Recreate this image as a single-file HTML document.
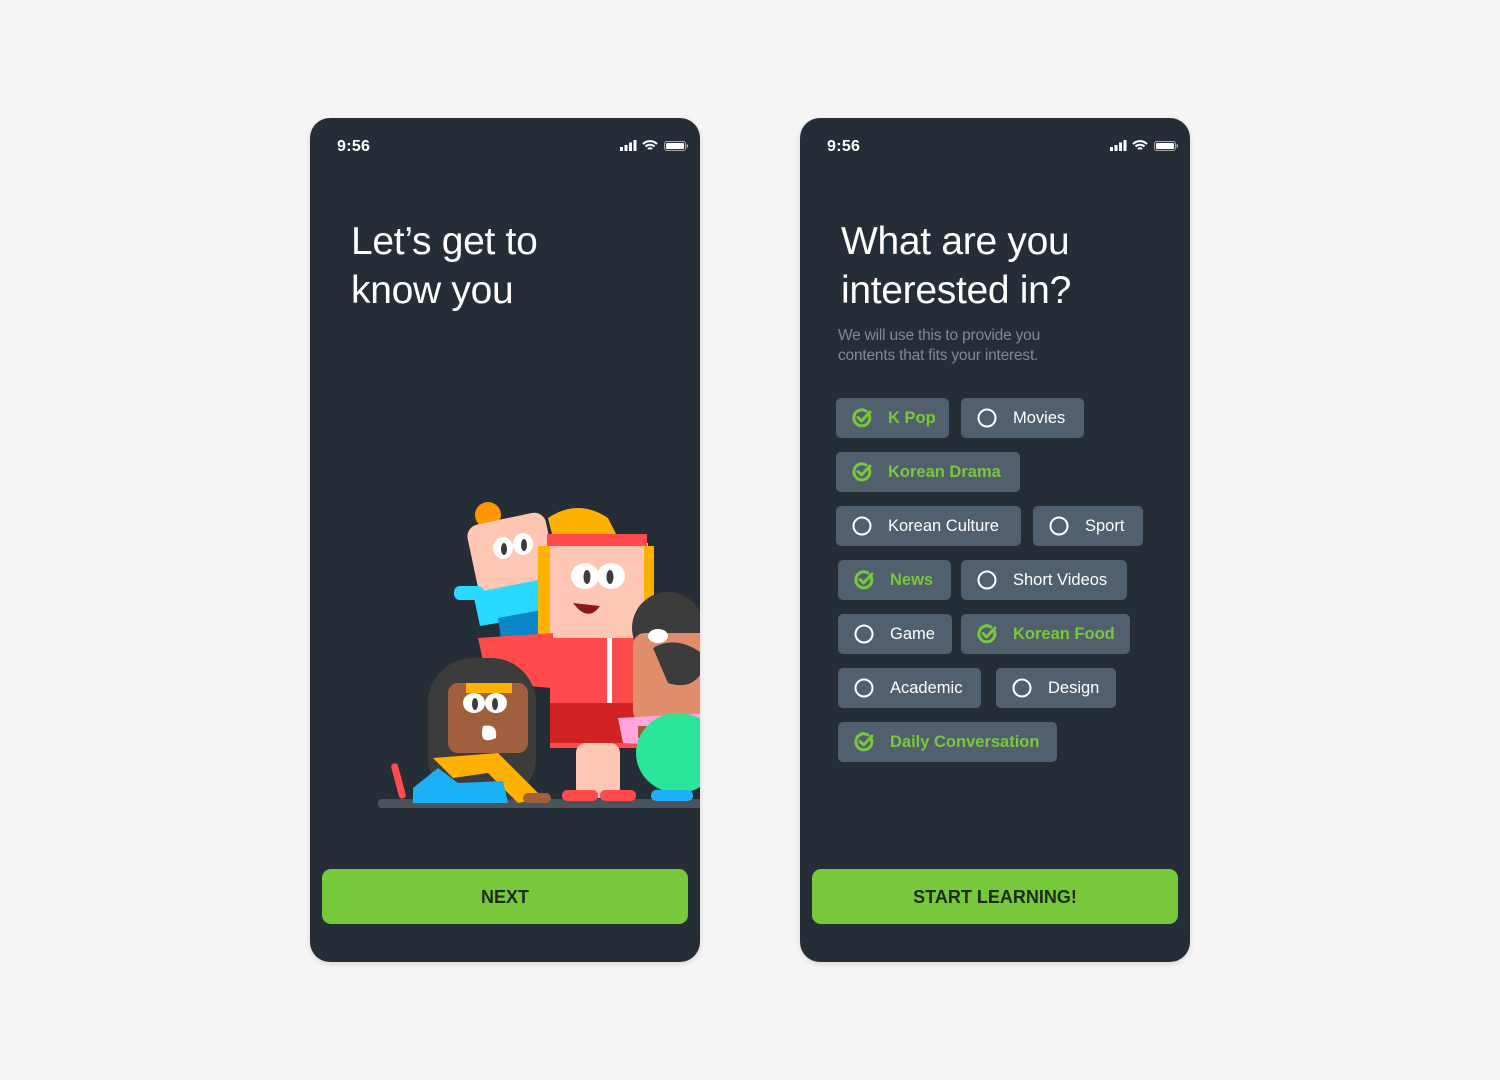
<!DOCTYPE html>
<html><head><style>
*{margin:0;padding:0;box-sizing:border-box}
body{width:1500px;height:1080px;background:#f5f5f5;position:relative;font-family:"Liberation Sans",sans-serif;overflow:hidden}
.ph{position:absolute;top:118px;width:390px;height:844px;background:#252e36;border-radius:20px;overflow:hidden;box-shadow:0 2px 6px rgba(0,0,0,.12)}
.time{position:absolute;left:27px;top:20px;color:#fff;font-size:16px;font-weight:bold;letter-spacing:.3px}
.st{position:absolute;right:12px;top:21px}
h1{position:absolute;left:41px;top:99px;color:#fff;font-size:39px;font-weight:normal;line-height:49px;font-family:"Liberation Sans",sans-serif;letter-spacing:-0.3px;white-space:nowrap}
.btn{position:absolute;left:12px;right:12px;top:751px;height:55px;background:#78c83c;border-radius:9px;color:#1f2a1a;font-weight:bold;font-size:18px;text-align:center;line-height:56px}
.sub{position:absolute;left:38px;top:208px;color:#7f8a96;font-size:15.5px;line-height:20px;letter-spacing:-0.2px}
.c{position:absolute;height:40px;background:#525f6c;border-radius:5px;color:#fff;font-size:16.5px;line-height:41px;padding-left:52px;white-space:nowrap;font-family:"Liberation Sans",sans-serif}
.c.g{color:#78c83c;font-weight:bold}
.c svg{position:absolute;left:15px;top:9px}
</style></head><body>
<div class="ph" style="left:310px">
<div class="time">9:56</div>
<svg class="st" width="68" height="14" viewBox="0 0 68 14"><rect x="0" y="8" width="3" height="4" fill="#fff"/><rect x="4.5" y="6" width="3" height="6" fill="#fff"/><rect x="9" y="3.5" width="3" height="8.5" fill="#fff"/><rect x="13.5" y="1" width="3" height="11" fill="#fff"/><path d="M23 5a10 10 0 0 1 14 0M25.5 7.5a6.5 6.5 0 0 1 9 0M28 10a3 3 0 0 1 4 0" stroke="#fff" stroke-width="2" fill="none"/><rect x="44.5" y="2.5" width="21" height="9" rx="2.5" stroke="#aaa" fill="none"/><rect x="46" y="4" width="18" height="6" rx="1" fill="#fff"/><rect x="66.5" y="5.5" width="1.5" height="3" fill="#aaa"/></svg>
<h1>Let’s get to<br>know you</h1>
<svg style="position:absolute;left:68px;top:380px" width="322" height="315" viewBox="0 0 322 315">
<rect x="0" y="301" width="330" height="9" rx="4" fill="#4b545d"/>
<circle cx="110" cy="17" r="13" fill="#ff9600"/>
<rect x="94" y="20" width="80" height="75" rx="12" fill="#ffc6b3" transform="rotate(-12 134 57)"/>
<ellipse cx="125" cy="50" rx="10" ry="11" fill="#fff"/><ellipse cx="145" cy="46" rx="10" ry="11" fill="#fff"/>
<ellipse cx="126" cy="51" rx="3" ry="6" fill="#3c3c3c"/><ellipse cx="146" cy="47" rx="3" ry="6" fill="#3c3c3c"/>
<path d="M95 95 L170 80 L178 115 L102 128Z" fill="#2ad9ff"/>
<rect x="76" y="88" width="30" height="14" rx="6" fill="#2ad9ff"/>
<path d="M120 120 L175 110 L180 150 L125 155Z" fill="#0a86c9"/>
<path d="M170 20 Q200 0 230 20 L240 40 L175 40Z" fill="#ffb100"/>
<rect x="168" y="45" width="102" height="100" fill="#ffc6b3"/>
<rect x="160" y="48" width="12" height="100" fill="#ffb100"/><rect x="266" y="48" width="10" height="80" fill="#ffb100"/>
<rect x="169" y="36" width="100" height="12" fill="#ff4b4b"/>
<ellipse cx="207" cy="78" rx="14" ry="13" fill="#fff"/><ellipse cx="233" cy="78" rx="14" ry="13" fill="#fff"/>
<ellipse cx="209" cy="79" rx="3.5" ry="7" fill="#3c3c3c"/><ellipse cx="232" cy="79" rx="3.5" ry="7" fill="#3c3c3c"/>
<path d="M195 105 Q210 125 222 108Z" fill="#8b1a1a"/>
<path d="M100 140 L175 135 L175 190 L110 185Z" fill="#ff4b4b"/>
<rect x="172" y="140" width="96" height="110" fill="#ff4b4b"/>
<rect x="172" y="205" width="100" height="40" fill="#d12121"/>
<rect x="229" y="140" width="5" height="65" fill="#fff"/>
<rect x="198" y="245" width="44" height="55" rx="10" fill="#ffc6b3"/>
<rect x="184" y="292" width="36" height="11" rx="5" fill="#ff4b4b"/><rect x="222" y="292" width="36" height="11" rx="5" fill="#ff4b4b"/>
<circle cx="290" cy="130" r="36" fill="#3c3c3c"/>
<rect x="255" y="135" width="80" height="90" rx="12" fill="#e08d6c"/>
<path d="M275 150 Q300 135 330 160 Q320 195 290 185Z" fill="#3c3c3c"/>
<ellipse cx="280" cy="138" rx="10" ry="7" fill="#fff"/>
<path d="M240 220 L330 215 L330 250 L245 245Z" fill="#ffa6e0"/>
<rect x="260" y="228" width="70" height="12" fill="#9e5a3a"/>
<ellipse cx="300" cy="255" rx="42" ry="40" fill="#2be59a"/>
<rect x="273" y="292" width="42" height="11" rx="5" fill="#1cb0f6"/>
<rect x="50" y="160" width="108" height="145" rx="45" fill="#3c3c3c"/>
<rect x="70" y="185" width="80" height="70" rx="10" fill="#a0603e"/>
<rect x="88" y="185" width="46" height="10" fill="#ffb100"/>
<ellipse cx="96" cy="205" rx="11" ry="10" fill="#fff"/><ellipse cx="118" cy="205" rx="11" ry="10" fill="#fff"/>
<ellipse cx="97" cy="206" rx="3" ry="6" fill="#3c3c3c"/><ellipse cx="117" cy="206" rx="3" ry="6" fill="#3c3c3c"/>
<path d="M105 228 Q120 225 118 240 Q100 248 105 228Z" fill="#fff"/>
<path d="M55 260 L120 255 L165 300 L140 305 L110 275 L75 280Z" fill="#ffb100"/>
<path d="M35 290 L60 270 L80 285 L125 283 L130 305 L35 305Z" fill="#1cb0f6"/>
<rect x="17" y="265" width="7" height="36" rx="3" fill="#ff4b4b" transform="rotate(-15 20 283)"/>
<rect x="145" y="295" width="28" height="10" rx="5" fill="#a0603e"/>
</svg>
<div class="btn">NEXT</div>
</div>

<div class="ph" style="left:800px">
<div class="time">9:56</div>
<svg class="st" width="68" height="14" viewBox="0 0 68 14"><rect x="0" y="8" width="3" height="4" fill="#fff"/><rect x="4.5" y="6" width="3" height="6" fill="#fff"/><rect x="9" y="3.5" width="3" height="8.5" fill="#fff"/><rect x="13.5" y="1" width="3" height="11" fill="#fff"/><path d="M23 5a10 10 0 0 1 14 0M25.5 7.5a6.5 6.5 0 0 1 9 0M28 10a3 3 0 0 1 4 0" stroke="#fff" stroke-width="2" fill="none"/><rect x="44.5" y="2.5" width="21" height="9" rx="2.5" stroke="#aaa" fill="none"/><rect x="46" y="4" width="18" height="6" rx="1" fill="#fff"/><rect x="66.5" y="5.5" width="1.5" height="3" fill="#aaa"/></svg>
<h1>What are you<br>interested in?</h1>
<div class="sub">We will use this to provide you<br>contents that fits your interest.</div>
<div class="btn">START LEARNING!</div>
</div>

<svg width="0" height="0" style="position:absolute"><defs>
<symbol id="ck" viewBox="0 0 22 22"><path d="M18.5 8.5A8 8 0 1 1 15 4" stroke="#78c83c" stroke-width="3" fill="none" stroke-linecap="round"/><path d="M7 10.5l3.5 3.5L19 5" stroke="#78c83c" stroke-width="3" fill="none" stroke-linecap="round" stroke-linejoin="round"/></symbol>
<symbol id="ci" viewBox="0 0 22 22"><circle cx="11" cy="11" r="8.5" stroke="#fff" stroke-width="2" fill="none"/></symbol>
</defs></svg>

<div class="c g" style="left:836px;top:398px;width:113px"><svg width="22" height="22"><use href="#ck"/></svg>K Pop</div>
<div class="c" style="left:961px;top:398px;width:123px"><svg width="22" height="22"><use href="#ci"/></svg>Movies</div>
<div class="c g" style="left:836px;top:452px;width:184px"><svg width="22" height="22"><use href="#ck"/></svg>Korean Drama</div>
<div class="c" style="left:836px;top:506px;width:185px"><svg width="22" height="22"><use href="#ci"/></svg>Korean Culture</div>
<div class="c" style="left:1033px;top:506px;width:110px"><svg width="22" height="22"><use href="#ci"/></svg>Sport</div>
<div class="c g" style="left:838px;top:560px;width:113px"><svg width="22" height="22"><use href="#ck"/></svg>News</div>
<div class="c" style="left:961px;top:560px;width:166px"><svg width="22" height="22"><use href="#ci"/></svg>Short Videos</div>
<div class="c" style="left:838px;top:614px;width:114px"><svg width="22" height="22"><use href="#ci"/></svg>Game</div>
<div class="c g" style="left:961px;top:614px;width:169px"><svg width="22" height="22"><use href="#ck"/></svg>Korean Food</div>
<div class="c" style="left:838px;top:668px;width:143px"><svg width="22" height="22"><use href="#ci"/></svg>Academic</div>
<div class="c" style="left:996px;top:668px;width:120px"><svg width="22" height="22"><use href="#ci"/></svg>Design</div>
<div class="c g" style="left:838px;top:722px;width:219px"><svg width="22" height="22"><use href="#ck"/></svg>Daily Conversation</div>
</body></html>
